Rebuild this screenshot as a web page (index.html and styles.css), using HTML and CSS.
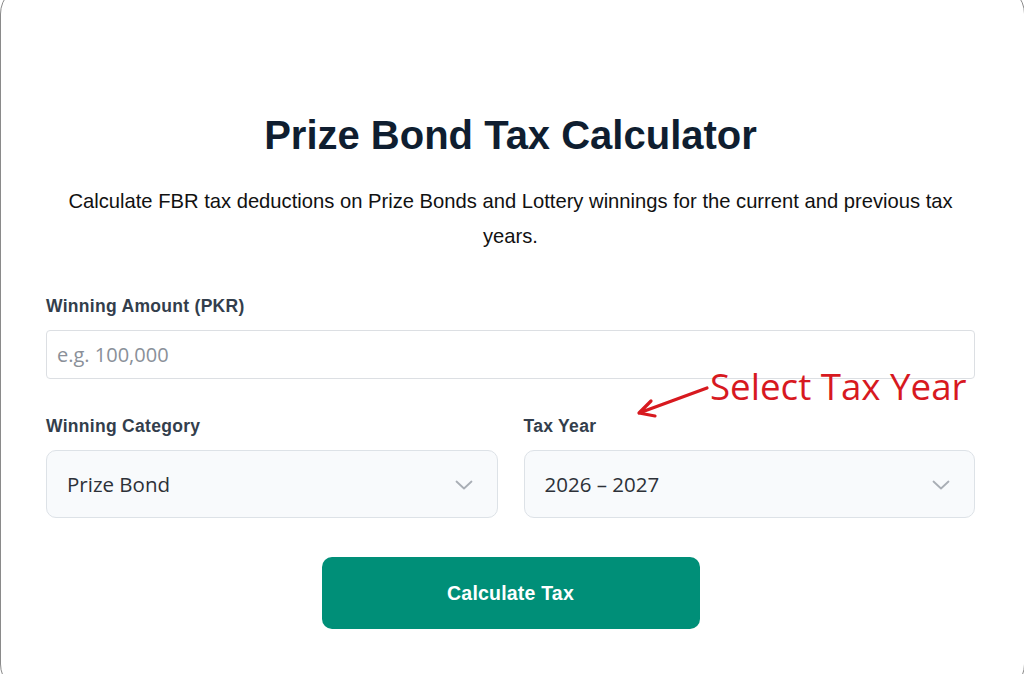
FILE: index.html
```html
<!DOCTYPE html>
<html lang="en">
<head>
<meta charset="utf-8">
<title>Prize Bond Tax Calculator</title>
<link rel="stylesheet" href="styles.css">
</head>
<body>
<div class="card">
  <h1 class="title">Prize Bond Tax Calculator</h1>
  <p class="subtitle">Calculate FBR tax deductions on Prize Bonds and Lottery winnings for the current and previous tax years.</p>

  <div class="field">
    <label class="label">Winning Amount (PKR)</label>
    <div class="input">e.g. 100,000</div>
  </div>

  <div class="row">
    <div class="field">
      <label class="label">Winning Category</label>
      <div class="select">
        <span>Prize Bond</span>
        <svg class="chev" width="18" height="10" viewBox="0 0 18 10"><path d="M1.5 1.5 L9 8.5 L16.5 1.5" fill="none" stroke="#a9aeb5" stroke-width="1.8" stroke-linecap="round" stroke-linejoin="round"/></svg>
      </div>
    </div>
    <div class="field">
      <label class="label">Tax Year</label>
      <div class="select">
        <span>2026 – 2027</span>
        <svg class="chev" width="18" height="10" viewBox="0 0 18 10"><path d="M1.5 1.5 L9 8.5 L16.5 1.5" fill="none" stroke="#a9aeb5" stroke-width="1.8" stroke-linecap="round" stroke-linejoin="round"/></svg>
      </div>
    </div>
  </div>

  <div class="actions">
    <button class="btn">Calculate Tax</button>
  </div>

  <div class="note">
    <svg class="note-arrow" width="76" height="34" viewBox="0 0 76 34"><path d="M72 4 L4 29 M4 29 L16 17 M4 29 L20 32" fill="none" stroke="#d7191f" stroke-width="3.2" stroke-linecap="round" stroke-linejoin="round"/></svg>
    <span class="note-text">Select Tax Year</span>
  </div>
</div>
</body>
</html>
```
FILE: styles.css
```css
* { box-sizing: border-box; }
html, body { margin: 0; padding: 0; background: #fff; overflow: hidden; }
body { width: 1024px; height: 674px; }

.card {
  position: relative;
  margin: -16px -1px 0 0;
  height: 710px;
  border: 1px solid #8a8a8a;
  border-radius: 30px;
  padding: 0 49px 0 45px;
  background: #fff;
  font-family: "Liberation Sans", Arial, sans-serif;
}

.title {
  margin: 0;
  padding-top: 127px;
  text-align: center;
  font-size: 40px;
  line-height: 46px;
  font-weight: 700;
  color: #0f1e30;
}

.subtitle {
  margin: 26px 0 0;
  text-align: center;
  font-size: 20.2px;
  line-height: 35px;
  color: #111;
}

.field { display: flex; flex-direction: column; }
.subtitle + .field { margin-top: 42px; }

.label {
  font-size: 17.5px;
  line-height: 20px;
  font-weight: 700;
  color: #333e4c;
  letter-spacing: 0.3px;
  margin-bottom: 14px;
}

.input {
  height: 49px;
  border: 1px solid #dcdfe3;
  border-radius: 4px;
  background: #fff;
  padding: 0 10px;
  display: flex;
  align-items: center;
  font-family: "Open Sans", "Noto Sans", sans-serif;
  font-size: 20px;
  color: #8a9099;
}

.row {
  margin-top: 37px;
  display: grid;
  grid-template-columns: 1fr 1fr;
  gap: 26px;
}

.select {
  height: 68px;
  border: 1px solid #dde2e7;
  border-radius: 10px;
  background: #f8fafc;
  padding: 0 24px 0 20px;
  display: flex;
  align-items: center;
  justify-content: space-between;
  font-family: "Open Sans", "Noto Sans", sans-serif;
  font-size: 20.5px;
  color: #2d3138;
}

.chev { flex: none; margin-top: 2px; }

.actions {
  margin-top: 39px;
  display: flex;
  justify-content: center;
}

.btn {
  width: 378px;
  height: 72px;
  border: 0;
  border-radius: 10px;
  background: #008f78;
  color: #fff;
  font-family: "Liberation Sans", Arial, sans-serif;
  font-size: 19.5px;
  font-weight: 700;
  letter-spacing: 0.2px;
}

.note {
  position: absolute;
  left: 634px;
  top: 398px;
  display: flex;
  align-items: flex-start;
}

.note-arrow { margin-top: 1px; }

.note-text {
  font-family: "Open Sans", "Noto Sans", sans-serif;
  font-size: 36.7px;
  line-height: 42px;
  color: #d7191f;
  margin-top: -18px;
  margin-left: -1px;
}
```
